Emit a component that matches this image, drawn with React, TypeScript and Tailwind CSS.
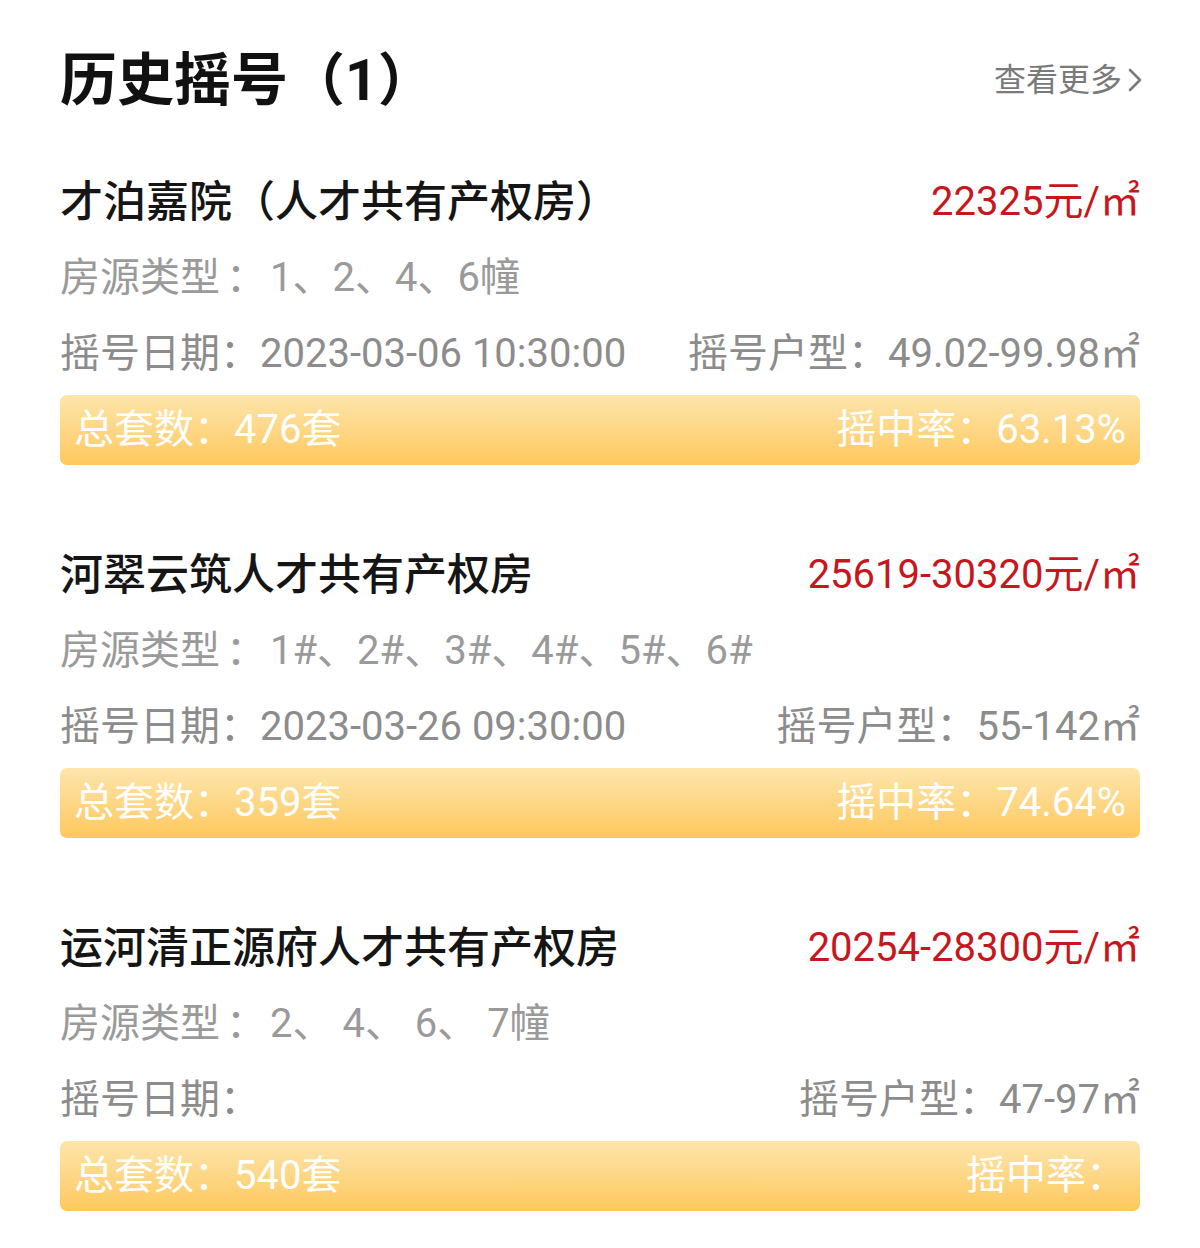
import React from 'react';

type Lottery = {
  name: string;
  price: string;
  types: string;
  date: string;
  area: string;
  total: string;
  rate: string;
};

const list: Lottery[] = [
  {
    name: '才泊嘉院（人才共有产权房）',
    price: '22325元/㎡',
    types: '1、2、4、6幢',
    date: '2023-03-06 10:30:00',
    area: '49.02-99.98㎡',
    total: '476套',
    rate: '63.13%',
  },
  {
    name: '河翠云筑人才共有产权房',
    price: '25619-30320元/㎡',
    types: '1#、2#、3#、4#、5#、6#',
    date: '2023-03-26 09:30:00',
    area: '55-142㎡',
    total: '359套',
    rate: '74.64%',
  },
  {
    name: '运河清正源府人才共有产权房',
    price: '20254-28300元/㎡',
    types: '2、 4、 6、 7幢',
    date: '',
    area: '47-97㎡',
    total: '540套',
    rate: '',
  },
];

const LotteryItem: React.FC<{ item: Lottery }> = ({ item }) => (
  <div className="flex flex-col">
    <div className="flex h-[76px] items-center justify-between">
      <span className="text-[43px] font-medium leading-none text-[#151515]">{item.name}</span>
      <span className="text-[40px] leading-none text-[#c8161d]">{item.price}</span>
    </div>
    <div className="flex h-[76px] items-center text-[40px] leading-none text-[#9a9a9a]">
      <span>房源类型</span>
      <span className="ml-[6px]">：</span>
      <span className="ml-[4px]">{item.types}</span>
    </div>
    <div className="flex h-[76px] items-center justify-between text-[40px] leading-none text-[#8c8c8c]">
      <span>摇号日期：{item.date}</span>
      <span>摇号户型：{item.area}</span>
    </div>
    <div className="mt-[3px] flex h-[70px] items-center justify-between rounded-[7px] bg-gradient-to-b from-[#fde5ab] to-[#fec85a] px-[14px] text-[40px] leading-none text-white">
      <span>总套数：{item.total}</span>
      <span>摇中率：{item.rate}</span>
    </div>
  </div>
);

export default function App() {
  return (
    <div
      className="min-h-[1248px] w-[1200px] bg-white px-[60px] pt-[40px]"
      style={{ fontFamily: 'Roboto, "Noto Sans CJK SC", sans-serif' }}
    >
      <div className="flex h-[80px] items-center justify-between">
        <h1 className="text-[57px] font-bold leading-none text-[#111]">历史摇号（1）</h1>
        <div className="-mr-[3px] flex items-center gap-[5px] text-[32px] leading-none text-[#7a7a7a]">
          <span>查看更多</span>
          <svg width="16" height="26" viewBox="0 0 16 26" fill="none">
            <path d="M3 3l10 10-10 10" stroke="#7a7a7a" strokeWidth="2.6" strokeLinecap="round" strokeLinejoin="round" />
          </svg>
        </div>
      </div>
      <div className="mt-[44px] flex flex-col gap-[72px]">
        {list.map((item) => (
          <LotteryItem key={item.name} item={item} />
        ))}
      </div>
    </div>
  );
}
